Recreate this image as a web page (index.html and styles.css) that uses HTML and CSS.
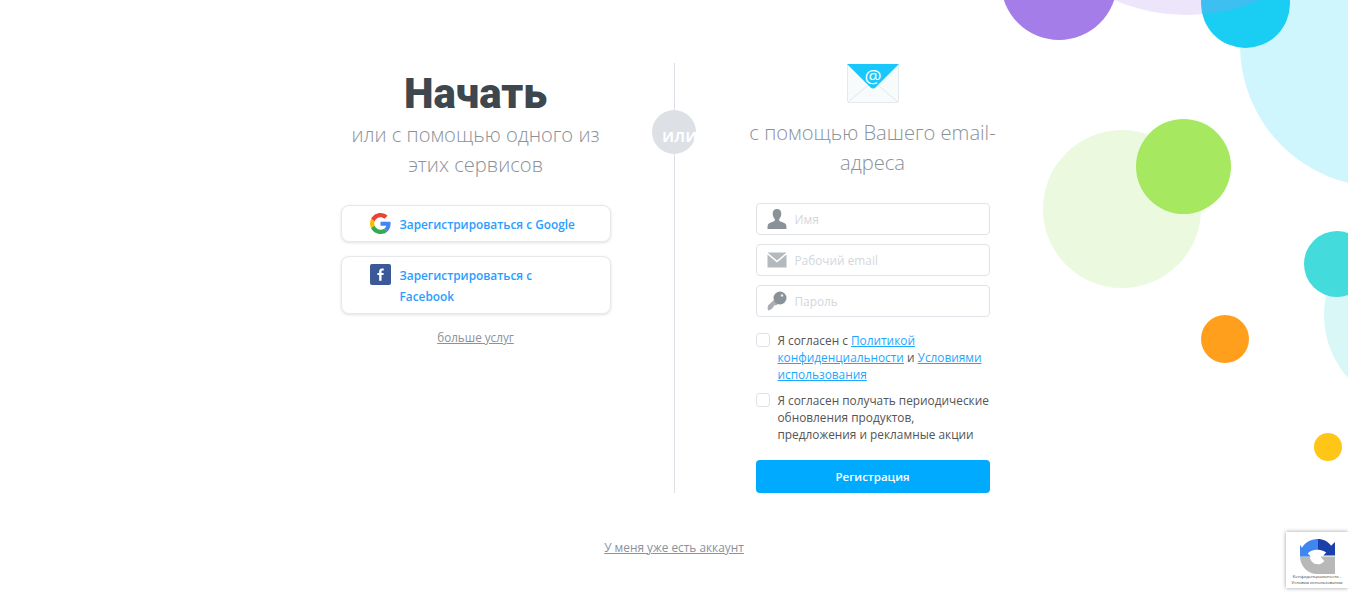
FILE: index.html
```html
<!DOCTYPE html>
<html lang="ru">
<head>
    <meta charset="utf-8">
    <title>Начать</title>
    <link rel="stylesheet" href="styles.css">
</head>
<body>
    <div class="bubbles">
        <i class="bubble b-sky"></i>
        <i class="bubble b-cyan"></i>
        <i class="bubble b-lilac"></i>
        <i class="bubble b-purple"></i>
        <i class="bubble b-pale-green"></i>
        <i class="bubble b-green"></i>
        <i class="bubble b-pale-teal"></i>
        <i class="bubble b-teal"></i>
        <i class="bubble b-orange"></i>
        <i class="bubble b-yellow"></i>
    </div>

    <div class="wrapper">
        <div class="col col-left">
            <h1>Начать</h1>
            <p class="sub">или с помощью одного из этих сервисов</p>
            <a class="social" href="#">
                <svg class="social-icon" viewBox="0 0 48 48">
                    <path fill="#EA4335" d="M24 9.5c3.54 0 6.71 1.22 9.21 3.6l6.85-6.85C35.9 2.38 30.47 0 24 0 14.62 0 6.51 5.38 2.56 13.22l7.98 6.19C12.43 13.72 17.74 9.5 24 9.5z"/>
                    <path fill="#4285F4" d="M46.98 24.55c0-1.57-.15-3.09-.38-4.55H24v9.02h12.94c-.58 2.96-2.26 5.48-4.78 7.18l7.73 6c4.51-4.18 7.09-10.36 7.09-17.65z"/>
                    <path fill="#FBBC05" d="M10.53 28.59c-.48-1.45-.76-2.99-.76-4.59s.27-3.14.76-4.59l-7.98-6.19C.92 16.46 0 20.12 0 24c0 3.88.92 7.54 2.56 10.78l7.97-6.19z"/>
                    <path fill="#34A853" d="M24 48c6.48 0 11.93-2.13 15.89-5.81l-7.73-6c-2.15 1.45-4.92 2.3-8.16 2.3-6.26 0-11.57-4.22-13.47-9.91l-7.98 6.19C6.51 42.62 14.62 48 24 48z"/>
                </svg>
                <span>Зарегистрироваться с Google</span>
            </a>
            <a class="social" href="#">
                <svg class="social-icon" viewBox="0 0 22 22">
                    <rect width="22" height="22" rx="2" fill="#3b5998"/>
                    <path fill="#fff" d="M12.1 17.5v-5.9h2l.3-2.3h-2.3V7.9c0-.7.2-1.1 1.1-1.1h1.2V4.7c-.2 0-.9-.1-1.8-.1-1.8 0-3 1.1-3 3.1v1.6H7.7v2.3h1.9v5.900z"/>
                </svg>
                <span>Зарегистрироваться с Facebook</span>
            </a>
            <a class="more" href="#">больше услуг</a>
        </div>

        <div class="or">или</div>

        <div class="col col-right">
            <svg class="envelope" viewBox="0 0 52 39">
                <rect x="0.5" y="0" width="51" height="38.5" rx="1.5" fill="#f8fbfc" stroke="#e3e9ec"/>
                <path d="M1 38 L26 17 L51 38" fill="none" stroke="#dfe8ec"/>
                <path d="M0 0 H52 L29 23 Q26 26 23 23 Z" fill="#19c8fb"/>
                <text x="26" y="18.5" class="envelope-at">@</text>
            </svg>
            <p class="sub sub-right">с помощью Вашего email-адреса</p>
            <form class="form">
                <label class="field">
                    <svg class="field-icon" viewBox="0 0 20 20">
                        <path fill="#8a9299" d="M10 0c2.8 0 4.3 2 4.3 4.8 0 2.3-1 4.2-2.100 5.200v1.400c0 1 4.400 1.700 6.200 3.300.9.800 1.100 2.300 1.100 5.300H.5c0-3 .2-4.500 1.100-5.300 1.800-1.600 6.200-2.300 6.200-3.300V10C6.700 9 5.700 7.100 5.700 4.800 5.700 2 7.200 0 10 0z"/>
                    </svg>
                    <input type="text" placeholder="Имя">
                </label>
                <label class="field">
                    <svg class="field-icon" viewBox="0 0 20 20">
                        <path fill="#b4b9be" d="M.5 2.500h19L10 10.500z"/>
                        <path fill="#b4b9be" d="M.5 4.500 10 12.500l9.500-8v13H.5z"/>
                    </svg>
                    <input type="email" placeholder="Рабочий email">
                </label>
                <label class="field">
                    <svg class="field-icon" viewBox="0 0 20 20">
                        <path fill="#a9aeb4" d="M1 14.500 8 8l4 4-3 2.500-1-.5-1.500 1.500-.5 1L4 18.500 1.500 19.500l-1-1.500z"/>
                        <circle cx="13" cy="7" r="6.500" fill="#8a9299"/>
                        <circle cx="15" cy="4.500" r="1.300" fill="#e6e8ea"/>
                    </svg>
                    <input type="password" placeholder="Пароль">
                </label>
                <div class="check">
                    <span class="box"></span>
                    <p>Я согласен с <a href="#">Политикой конфиденциальности</a> и <a href="#">Условиями использования</a></p>
                </div>
                <div class="check">
                    <span class="box"></span>
                    <p>Я согласен получать периодические обновления продуктов, предложения и рекламные акции</p>
                </div>
                <button class="submit" type="button">Регистрация</button>
            </form>
        </div>
    </div>

    <div class="footer"><a href="#">У меня уже есть аккаунт</a></div>

    <div class="recaptcha">
        <svg class="recaptcha-logo" viewBox="0 0 36 36">
            <path fill="#b8b8b8" d="M0 18h10c.5 4.500 4 8 8 8 3 0 5.500-1.500 7-3.500L21 18h15v18H18C8 36 0 28 0 18z"/>
            <path fill="#3f86f0" d="M18 0C11 0 5 4 2 9L0 6v12h11l-3-3c1-2 5-4 10-4z"/>
            <path fill="#1a3fa8" d="M18 0c6 0 11 2.600 14 7l4-4v14H24l3-3c-1-1-5-3-9-3z"/>
        </svg>
        <div class="recaptcha-text">Конфиденциальность - Условия использования</div>
    </div>
</body>
</html>
```

FILE: styles.css
```css
*{margin: 0;padding: 0;box-sizing: border-box;}
html,body{height: 100%;overflow: hidden;}
body{position: relative;background: #fff;font-family: "Open Sans","Noto Sans",sans-serif;font-size: 11.85px;color: #555;}
a{color: inherit;}

/* decorative circles */
.bubbles{position: absolute;top: 0;left: 0;width: 100%;height: 100%;overflow: hidden;}
.bubble{position: absolute;display: block;border-radius: 50%;}
.b-purple{left: 1001px;top: -76px;width: 116px;height: 116px;background: #a57de8;}
.b-lilac{left: 1001px;top: -357px;width: 372px;height: 372px;background: rgba(178,149,234,.235);}
.b-cyan{left: 1201px;top: -41px;width: 89px;height: 89px;background: #19cdf3;}
.b-sky{left: 1240px;top: -97px;width: 284px;height: 284px;background: #cff5fd;}
.b-pale-green{left: 1043px;top: 130px;width: 158px;height: 158px;background: #ebf9df;}
.b-green{left: 1136px;top: 119px;width: 95px;height: 95px;background: #a6e860;}
.b-pale-teal{left: 1324px;top: 220px;width: 190px;height: 190px;background: #d9f7f7;}
.b-teal{left: 1304px;top: 231px;width: 66px;height: 66px;background: #43dbdc;}
.b-orange{left: 1201px;top: 315px;width: 48px;height: 48px;background: #ff9f1c;}
.b-yellow{left: 1314px;top: 433px;width: 28px;height: 28px;background: #ffc517;}

.wrapper{position: relative;display: flex;justify-content: center;margin-top: 63px;height: 430px;}
.col{width: 396px;display: flex;flex-direction: column;align-items: center;}
.col-right{width: 397px;border-left: 1px solid #dde1e6;}

h1{margin-top: 1px;font-family: Roboto,"Open Sans",sans-serif;font-size: 42px;font-weight: 900;line-height: 60px;color: #3e464e;}
.sub{width: 270px;font-size: 20.15px;font-weight: 300;line-height: 30px;color: #8b9199;text-align: center;}
.col-left .sub{margin-top: -5px;}

.social{display: flex;align-items: flex-start;width: 270px;margin-top: 14px;padding: 7px 28px 6px;background: #fff;border: 1px solid #e6e8eb;border-radius: 8px;box-shadow: 0 1px 3px rgba(0,0,0,.12);font-weight: 600;line-height: 21px;color: #2a9dff;text-decoration: none;}
.col-left .sub + .social{margin-top: 26px;}
.social span{flex: 1;padding-top: 1px;}
.social-icon{flex: none;width: 21px;height: 21px;margin-right: 9px;}
.more{margin-top: 15px;font-size: 11.7px;color: #8b9199;}

.or{position: absolute;left: 652px;top: 47px;width: 44px;height: 44px;padding-left: 10px;border-radius: 50%;background: #dde1e6;font-size: 18px;font-weight: 600;line-height: 50px;color: #fff;}

.envelope{display: block;flex: none;width: 52px;height: 39px;margin-top: 1px;}
.envelope-at{font-family: "Open Sans",sans-serif;font-size: 19px;fill: #fff;text-anchor: middle;}
.sub-right{margin-top: 14px;}

.form{width: 234px;margin-top: 26px;}
.field{display: flex;align-items: center;height: 32px;margin-bottom: 9px;padding-left: 10px;background: #fff;border: 1px solid #dfe3e8;border-radius: 4px;}
.field-icon{flex: none;width: 20px;height: 20px;}
.field input{flex: 1;min-width: 0;margin-left: 8px;border: 0;outline: 0;background: transparent;font-family: inherit;font-size: 11.85px;color: #555;}
.field input::placeholder{color: #d3d7dc;opacity: 1;}

.check{display: flex;margin-top: 15px;line-height: 17px;}
.check + .check{margin-top: 9px;}
.box{flex: none;width: 14px;height: 14px;margin: 1px 8px 0 0;background: #fff;border: 1px solid #dfe3e8;border-radius: 3px;}
.check a{color: #1ea7ff;}

.submit{display: block;width: 234px;height: 33px;margin-top: 17px;background: #0af;border: 0;border-radius: 4px;font-family: inherit;font-size: 11.5px;font-weight: 600;color: #fff;}

.footer{position: relative;margin-top: 46px;text-align: center;color: #8b9199;}

.recaptcha{position: absolute;right: 0;top: 532px;width: 62px;height: 56px;background: #fff;box-shadow: 0 0 4px rgba(0,0,0,.4);text-align: center;}
.recaptcha-logo{display: block;width: 35px;height: 35px;margin: 7px 0 0 14px;}
.recaptcha-text{margin: 0 auto;width: 52px;font-size: 4.3px;line-height: 5.5px;color: #444;}
```
